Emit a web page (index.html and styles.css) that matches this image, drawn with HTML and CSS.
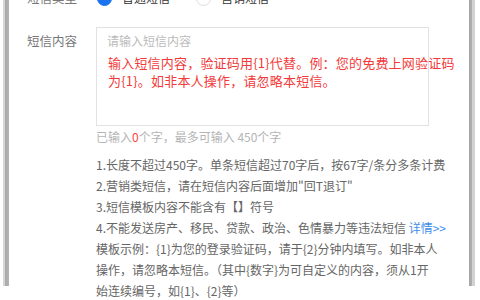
FILE: index.html
```html
<!DOCTYPE html>
<html lang="zh-CN">

<head>
    <meta charset="UTF-8">
    <meta name="viewport" content="width=device-width, initial-scale=1.0">
    <title>短信模板</title>
    <link rel="stylesheet" href="styles.css">
</head>

<body>
    <!-- 弹窗主体 -->
    <div class="frame">
        <!-- 短信类型 -->
        <div class="form-row row-type">
            <label class="form-label">短信类型</label>
            <div class="form-ctrl radios">
                <span class="radio checked"><i></i>普通短信</span>
                <span class="radio"><i></i>营销短信</span>
            </div>
        </div>
        <!-- 短信内容 -->
        <div class="form-row row-content">
            <label class="form-label label-content">短信内容</label>
            <div class="form-ctrl">
                <div class="textbox">
                    <textarea placeholder="请输入短信内容"></textarea>
                    <div class="note">输入短信内容，验证码用{1}代替。例：您的免费上网验证码<br>为{1}。如非本人操作，请忽略本短信。</div>
                </div>
                <div class="counter">已输入<em>0</em>个字，最多可输入 450个字</div>
                <div class="tips">
                    <p>1.长度不超过450字。单条短信超过70字后，按67字/条分多条计费</p>
                    <p>2.营销类短信，请在短信内容后面增加"回T退订"</p>
                    <p>3.短信模板内容不能含有【】符号</p>
                    <p>4.不能发送房产、移民、贷款、政治、色情暴力等违法短信 <a href="javascript:;">详情&gt;&gt;</a></p>
                    <p>模板示例：{1}为您的登录验证码，请于{2}分钟内填写。如非本人<br>操作，请忽略本短信。（其中{数字}为可自定义的内容，须从1开<br>始连续编号，如{1}、{2}等）</p>
                </div>
            </div>
        </div>
    </div>
</body>

</html>
```

FILE: styles.css
```css
* {
    margin: 0;
    padding: 0;
    box-sizing: border-box;
}

html,
body {
    height: 100%;
    overflow: hidden;
    background: #fff;
}

body {
    font-family: "Noto Sans CJK SC", "Noto Sans", sans-serif;
    font-size: 12px;
    color: #666;
}

.frame {
    margin-left: 3px;
    width: 472px;
    height: 300px;
    padding-left: 24px;
    background: linear-gradient(to right,
            #d6d6d6 0, #d6d6d6 2px,
            #a9a9a9 2px, #b4b4b4 6px,
            #fff 6px, #fff 466px,
            #a4a4a4 466px, #b0b0b0 469px,
            #d2d2d2 469px, #d2d2d2 472px);
}

.form-row {
    display: flex;
}

.form-label {
    width: 69px;
    flex-shrink: 0;
    font-size: 12.5px;
    line-height: 18px;
    color: #777;
}

.row-type {
    margin-top: -14px;
    height: 24px;
    align-items: center;
}

.radios {
    display: flex;
    align-items: center;
}

.radio {
    display: flex;
    align-items: center;
    color: #333;
    line-height: 18px;
    margin-right: 25px;
}

.radio i {
    width: 15px;
    height: 15px;
    border-radius: 50%;
    border: 1px solid #ddd;
    margin: 0 10px 0 1px;
}

.radio.checked i {
    background: #1a73f0;
    border-color: #1a73f0;
}

.row-content {
    margin-top: 17px;
}

.label-content {
    padding-top: 5px;
}

.textbox {
    position: relative;
}

.textbox textarea {
    display: block;
    width: 333px;
    height: 99px;
    padding: 4px 10px;
    border: 1px solid #e2e2e2;
    font-family: inherit;
    font-size: 12px;
    line-height: 18px;
    resize: none;
    outline: none;
}

.textbox textarea::placeholder {
    color: #bbb;
}

/* 标注文字 */
.note {
    position: absolute;
    left: 12px;
    top: 27px;
    white-space: nowrap;
    font-size: 13px;
    letter-spacing: .2px;
    line-height: 18px;
    color: #f23a3a;
}

.counter {
    margin-top: 2px;
    line-height: 18px;
    color: #b5b5b5;
}

.counter em {
    font-style: normal;
    color: #f44;
}

.tips {
    margin-top: 8px;
    line-height: 21px;
    white-space: nowrap;
    color: #666;
}

.tips a {
    color: #3d8ee8;
    text-decoration: none;
}
```
